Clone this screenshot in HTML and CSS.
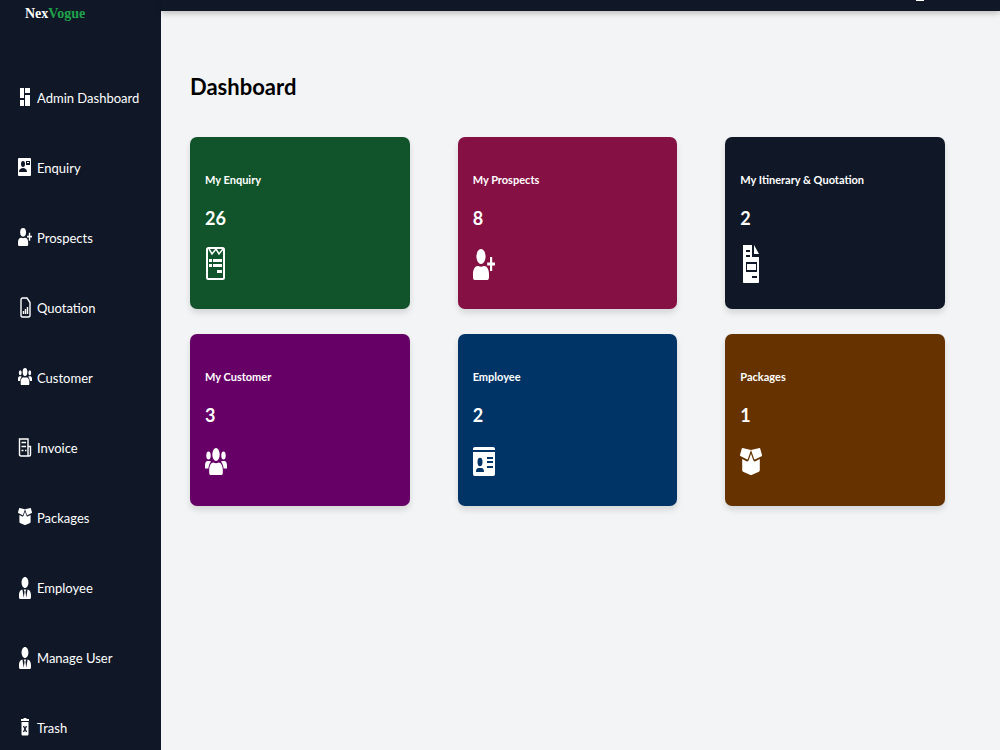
FILE: index.html
```
<!DOCTYPE html>
<html lang="en">
<head>
    <meta charset="UTF-8">
    <meta name="viewport" content="width=device-width, initial-scale=1.0">
    <title>NexVogue - Dashboard</title>
    <link rel="stylesheet" href="styles.css">
</head>
<body>
    <!-- Shared icons -->
    <svg class="sprite" aria-hidden="true">
        <symbol id="user-plus" viewBox="0 0 22 31" preserveAspectRatio="none">
            <ellipse cx="8" cy="7.500" rx="4.600" ry="7.500"/>
            <path d="M0 28v-3c0-4.500 2-8 4.800-8h.6c1.600 1 3.600 1 5.200 0h.6c2.800 0 4.800 3.500 4.800 8v3c0 1.800-.6 3-1.600 3H1.600C.6 31 0 29.800 0 28z"/>
            <path d="M17 8h2.200v5.500H22v3h-2.800V22H17v-5.500h-2.800v-3H17z"/>
        </symbol>
        <symbol id="user-tie" viewBox="0 0 448 512" preserveAspectRatio="none">
            <path d="M224 256c70.700 0 128-57.300 128-128S294.700 0 224 0 96 57.300 96 128s57.300 128 128 128zm95.800 32.600L272 480l-32-136 32-56h-96l32 56-32 136-47.800-191.400C56.900 292 0 350.300 0 422.400V464c0 26.500 21.500 48 48 48h352c26.500 0 48-21.500 48-48v-41.600c0-72.100-56.900-130.400-128.200-133.800z"/>
        </symbol>
        <symbol id="box-open" viewBox="0 32 640 448" preserveAspectRatio="none">
            <path d="M425.700 256c-16.900 0-32.800-9-41.400-23.400L320 126l-64.200 106.600c-8.700 14.500-24.600 23.500-41.500 23.500-4.500 0-9-.6-13.300-1.900L64 215v178c0 14.700 10 27.500 24.200 31l216.200 54.100c10.200 2.500 20.900 2.500 31 0L551.800 424c14.200-3.600 24.200-16.400 24.200-31V215l-137 39.100c-4.300 1.300-8.800 1.900-13.300 1.900zm212.600-112.200L586.800 41c-3.100-6.200-9.800-9.800-16.700-8.900L320 64l91.700 152.100c3.800 6.300 11.400 9.300 18.500 7.300l197.900-56.500c9.900-2.900 14.700-13.900 10.200-23.100zM53.200 41L1.700 143.800c-4.600 9.200.3 20.200 10.100 23l197.900 56.500c7.100 2 14.700-1 18.500-7.300L320 64 69.800 32.100c-6.900-.8-13.500 2.700-16.600 8.900z"/>
        </symbol>
        <symbol id="users" viewBox="0 0 22 27" preserveAspectRatio="none">
            <ellipse cx="11" cy="6.500" rx="3.700" ry="6.500"/>
            <ellipse cx="3.500" cy="7.500" rx="2.200" ry="4"/>
            <ellipse cx="18.500" cy="7.500" rx="2.200" ry="4"/>
            <path d="M4.200 25v-3c0-4 1.800-7.500 4.300-7.500 1.500 1 3.500 1 5 0 2.500 0 4.300 3.500 4.300 7.500v3c0 1.200-.5 2-1.300 2h-11c-.8 0-1.300-.8-1.300-2z"/>
            <path d="M0 20.500v-3C0 15 1 13 2.600 13h1.800c.7 0 1.200.3 1.600.8-1.500 1.500-2.400 4-2.600 6.700zM22 20.500v-3c0-2.500-1-4.500-2.600-4.500h-1.800c-.7 0-1.200.3-1.600.8 1.500 1.500 2.400 4 2.600 6.700z"/>
        </symbol>
    </svg>

    <aside class="sidebar">
        <a href="#" class="logo">Nex<span>Vogue</span></a>
        <nav>
            <a href="#" class="nav-link">
                <svg class="nav-icon" viewBox="0 0 14 22"><path d="M2 1h4v10H2zM2 13h4v6H2zM7 1h5v5H7zM7 8h5v11H7z"/></svg>
                Admin Dashboard
            </a>
            <a href="#" class="nav-link">
                <svg class="nav-icon" viewBox="0 0 14 22">
                    <rect x="0" y="1" width="13" height="18" rx="1"/>
                    <g class="cut"><ellipse cx="5" cy="7" rx="2" ry="3"/><path d="M1 15c0-3 2-4 4-4s4 1 4 4zM8 4h4v4H8z"/></g>
                    <path d="M9 5h2v1H9z"/>
                </svg>
                Enquiry
            </a>
            <a href="#" class="nav-link">
                <svg class="nav-icon"><use href="#user-plus" y="1" width="14" height="18"/></svg>
                Prospects
            </a>
            <a href="#" class="nav-link">
                <svg class="nav-icon line" viewBox="0 0 14 22">
                    <path d="M4.500 1H9l3 4.500V18c0 1.200-.5 2-1.500 2h-6c-1 0-1.500-.8-1.500-2V3c0-1.200.5-2 1.500-2z"/>
                    <path d="M5.500 17v-3M7.500 17v-5M9.500 17v-7"/>
                </svg>
                Quotation
            </a>
            <a href="#" class="nav-link">
                <svg class="nav-icon"><use href="#users" y="1" width="14" height="17"/></svg>
                Customer
            </a>
            <a href="#" class="nav-link">
                <svg class="nav-icon line" viewBox="0 0 14 22">
                    <path d="M1.500 2H10v17H3c-1 0-1.500-.6-1.500-1.500zM10 9.500h2.500v8c0 1-.5 1.500-1.300 1.500H10M3.500 5.500H8M3.500 9.500H8M3.500 13.500h2M7 13.500h1.500"/>
                </svg>
                Invoice
            </a>
            <a href="#" class="nav-link">
                <svg class="nav-icon"><use href="#box-open" y="1" width="14" height="17"/></svg>
                Packages
            </a>
            <a href="#" class="nav-link">
                <svg class="nav-icon"><use href="#user-tie" x="1" width="12" height="22"/></svg>
                Employee
            </a>
            <a href="#" class="nav-link">
                <svg class="nav-icon"><use href="#user-tie" x="1" width="12" height="22"/></svg>
                Manage User
            </a>
            <a href="#" class="nav-link">
                <svg class="nav-icon" viewBox="0 0 14 22">
                    <path d="M3 2h2l1-1h2l1 1h2v2H3zM3.500 5h7v12c0 1-.5 1.500-1.500 1.500H5c-1 0-1.500-.5-1.500-1.500z"/>
                    <path class="cut-line" d="M5.500 9l3 6M8.500 9l-3 6"/>
                </svg>
                Trash
            </a>
        </nav>
    </aside>

    <div class="page">
        <header class="topbar">
            <span class="topbar-mark"></span>
        </header>

        <main class="content">
            <h1>Dashboard</h1>

            <div class="cards">
                <section class="card enquiry">
                    <h2>My Enquiry</h2>
                    <p>26</p>
                    <svg class="card-icon" viewBox="0 0 24 40">
                        <rect class="outline" x="2" y="4" width="17" height="31" rx="1.500"/>
                        <path class="outline thin" d="M4 5l3 5 4-5 3 5 4-5"/>
                        <path d="M4 15h3v3H4zM8 15h9v3H8zM4 20h3v3H4zM8 20h9v3H8zM12 26h5v3h-5z"/>
                    </svg>
                </section>
                <section class="card prospects">
                    <h2>My Prospects</h2>
                    <p>8</p>
                    <svg class="card-icon"><use href="#user-plus" y="5" width="22" height="31"/></svg>
                </section>
                <section class="card quotation">
                    <h2>My Itinerary &amp; Quotation</h2>
                    <p>2</p>
                    <svg class="card-icon" viewBox="0 0 24 40">
                        <path fill-rule="evenodd" d="M3 1h9v12h7v25c0 .6-.4 1-1 1H4c-.6 0-1-.4-1-1zM6 6v2h4V6zM6 11v2h4v-2zM6 18v10h11V18zM7 20h9v6H7zM12 32v2h5v-2zM14 1l5 9h-5z"/>
                    </svg>
                </section>
                <section class="card customer">
                    <h2>My Customer</h2>
                    <p>3</p>
                    <svg class="card-icon"><use href="#users" y="7" width="22" height="27"/></svg>
                </section>
                <section class="card employee">
                    <h2>Employee</h2>
                    <p>2</p>
                    <svg class="card-icon" viewBox="0 0 24 40">
                        <path fill-rule="evenodd" d="M0 9V8c0-1 .7-2 1.700-2h18.600c1 0 1.700 1 1.700 2v1zM0 11h22v22c0 1-.7 2-1.700 2H1.700c-1 0-1.700-1-1.700-2zM14 16v2h6v-2zM14 20v2h6v-2zM14 25v2h6v-2zM3 31h8c0-3-1-4-2.500-4h-3C4 27 3 28 3 31z"/>
                        <ellipse class="cut" cx="7" cy="21" rx="2.500" ry="4.200"/>
                    </svg>
                </section>
                <section class="card packages">
                    <h2>Packages</h2>
                    <p>1</p>
                    <svg class="card-icon"><use href="#box-open" y="7" width="22" height="27"/></svg>
                </section>
            </div>
        </main>
    </div>
</body>
</html>
```
FILE: styles.css
```
:root {
    --dark: #101827;
    --light: #ffffff;
    --page: #f2f4f6;
}

* {
    box-sizing: border-box;
    margin: 0;
    padding: 0;
}

body {
    display: flex;
    height: 100vh;
    overflow: hidden;
    font-family: Lato, 'Open Sans', sans-serif;
    background: var(--page);
}

.sprite {
    display: none;
}

.sidebar {
    flex: 0 0 161px;
    background: var(--dark);
    color: var(--light);
    overflow: hidden;
}

.logo {
    display: block;
    height: 63px;
    padding: 2px 0 0 25px;
    font-family: 'Liberation Serif', serif;
    font-size: 14px;
    font-weight: 700;
    line-height: 24px;
    color: var(--light);
    text-decoration: none;
}

.logo span {
    color: #1fa24a;
}

.nav-link {
    display: flex;
    align-items: center;
    gap: 5px;
    height: 70px;
    padding-left: 18px;
    font-size: 13px;
    line-height: 24px;
    color: var(--light);
    text-decoration: none;
    white-space: nowrap;
}

.nav-icon {
    flex-shrink: 0;
    width: 14px;
    height: 22px;
    fill: currentColor;
}

.line {
    fill: none;
    stroke: currentColor;
    stroke-width: 1.4;
}

.cut {
    fill: var(--dark);
}

.cut-line {
    stroke: var(--dark);
    stroke-width: 1.3;
}

.page {
    flex: 1;
    min-width: 0;
}

.topbar {
    display: flex;
    justify-content: flex-end;
    height: 11px;
    padding-right: 76px;
    background: var(--dark);
    box-shadow: 0 2px 6px rgba(0, 0, 0, 0.25);
}

.topbar-mark {
    width: 8px;
    height: 1px;
    background: var(--light);
}

.content {
    padding: 52px 55px 0 29px;
}

h1 {
    margin-bottom: 26px;
    font-size: 22px;
    font-weight: 700;
    line-height: 48px;
    color: #000;
}

.cards {
    display: grid;
    grid-template-columns: repeat(3, 1fr);
    gap: 25px 48px;
}

.card {
    display: flex;
    flex-direction: column;
    gap: 10px;
    padding: 31px 15px 25px;
    border-radius: 7px;
    color: var(--light);
    box-shadow: 0 4px 6px rgba(0, 0, 0, 0.12);
}

.card h2 {
    font-size: 11px;
    font-weight: 700;
    line-height: 24px;
    white-space: nowrap;
}

.card p {
    font-size: 18px;
    font-weight: 700;
    line-height: 32px;
}

.card-icon {
    width: 24px;
    height: 40px;
    fill: currentColor;
}

.outline {
    fill: none;
    stroke: currentColor;
    stroke-width: 2;
}

.thin {
    stroke-width: 1.5;
}

.enquiry {
    background: #11542b;
}

.prospects {
    background: #851043;
}

.quotation {
    background: var(--dark);
}

.customer {
    background: #660066;
}

.employee {
    background: #003366;
}

.employee .cut {
    fill: #003366;
}

.packages {
    background: #663300;
}
```
